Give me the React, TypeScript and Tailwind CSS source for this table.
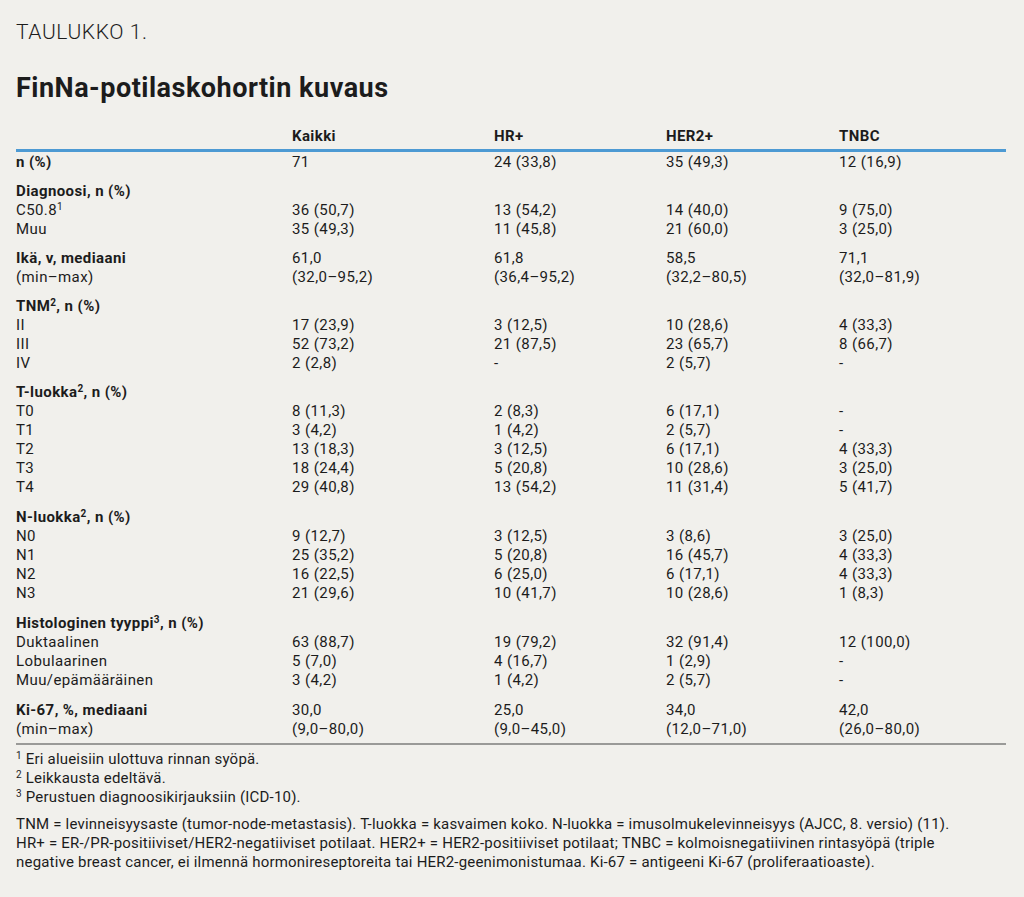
import type { ReactNode } from "react";

type Row = { label: ReactNode; bold?: boolean; vals?: string[] };

const Sup = ({ n }: { n: number }) => (
  <sup className="text-[10px] -top-[0.55em]">{n}</sup>
);

const groups: Row[][] = [
  [{ label: "n (%)", bold: true, vals: ["71", "24 (33,8)", "35 (49,3)", "12 (16,9)"] }],
  [
    { label: "Diagnoosi, n (%)", bold: true },
    { label: <>C50.8<Sup n={1} /></>, vals: ["36 (50,7)", "13 (54,2)", "14 (40,0)", "9 (75,0)"] },
    { label: "Muu", vals: ["35 (49,3)", "11 (45,8)", "21 (60,0)", "3 (25,0)"] },
  ],
  [
    { label: "Ikä, v, mediaani", bold: true, vals: ["61,0", "61,8", "58,5", "71,1"] },
    { label: "(min–max)", vals: ["(32,0–95,2)", "(36,4–95,2)", "(32,2–80,5)", "(32,0–81,9)"] },
  ],
  [
    { label: <>TNM<Sup n={2} />, n (%)</>, bold: true },
    { label: "II", vals: ["17 (23,9)", "3 (12,5)", "10 (28,6)", "4 (33,3)"] },
    { label: "III", vals: ["52 (73,2)", "21 (87,5)", "23 (65,7)", "8 (66,7)"] },
    { label: "IV", vals: ["2 (2,8)", "-", "2 (5,7)", "-"] },
  ],
  [
    { label: <>T-luokka<Sup n={2} />, n (%)</>, bold: true },
    { label: "T0", vals: ["8 (11,3)", "2 (8,3)", "6 (17,1)", "-"] },
    { label: "T1", vals: ["3 (4,2)", "1 (4,2)", "2 (5,7)", "-"] },
    { label: "T2", vals: ["13 (18,3)", "3 (12,5)", "6 (17,1)", "4 (33,3)"] },
    { label: "T3", vals: ["18 (24,4)", "5 (20,8)", "10 (28,6)", "3 (25,0)"] },
    { label: "T4", vals: ["29 (40,8)", "13 (54,2)", "11 (31,4)", "5 (41,7)"] },
  ],
  [
    { label: <>N-luokka<Sup n={2} />, n (%)</>, bold: true },
    { label: "N0", vals: ["9 (12,7)", "3 (12,5)", "3 (8,6)", "3 (25,0)"] },
    { label: "N1", vals: ["25 (35,2)", "5 (20,8)", "16 (45,7)", "4 (33,3)"] },
    { label: "N2", vals: ["16 (22,5)", "6 (25,0)", "6 (17,1)", "4 (33,3)"] },
    { label: "N3", vals: ["21 (29,6)", "10 (41,7)", "10 (28,6)", "1 (8,3)"] },
  ],
  [
    { label: <>Histologinen tyyppi<Sup n={3} />, n (%)</>, bold: true },
    { label: "Duktaalinen", vals: ["63 (88,7)", "19 (79,2)", "32 (91,4)", "12 (100,0)"] },
    { label: "Lobulaarinen", vals: ["5 (7,0)", "4 (16,7)", "1 (2,9)", "-"] },
    { label: "Muu/epämääräinen", vals: ["3 (4,2)", "1 (4,2)", "2 (5,7)", "-"] },
  ],
  [
    { label: "Ki-67, %, mediaani", bold: true, vals: ["30,0", "25,0", "34,0", "42,0"] },
    { label: "(min–max)", vals: ["(9,0–80,0)", "(9,0–45,0)", "(12,0–71,0)", "(26,0–80,0)"] },
  ],
];

const cols = "grid grid-cols-[276px_202px_172px_173px_1fr]";

function TableRow({ row }: { row: Row }) {
  return (
    <div className={cols}>
      <div className={row.bold ? "font-bold" : ""}>{row.label}</div>
      {(row.vals ?? ["", "", "", ""]).map((v, i) => (
        <div key={i}>{v}</div>
      ))}
      <div />
    </div>
  );
}

export default function App() {
  return (
    <div
      className="min-h-screen bg-[#f1f0ec] text-[#1c1c1c] pl-4 pr-[18px] pt-[19px]"
      style={{ fontFamily: "Roboto, 'Noto Sans', sans-serif" }}
    >
      <h2 className="text-[21px] leading-[26px] font-light tracking-[0.6px]">TAULUKKO 1.</h2>
      <h1 className="mt-[27px] text-[27px] leading-[32px] font-bold tracking-[0.5px]">
        FinNa-potilaskohortin kuvaus
      </h1>

      <div className="mt-[23px] text-[15px] leading-[19px] tracking-[0.4px]">
        <div className={`${cols} font-bold`}>
          <div />
          <div>Kaikki</div>
          <div>HR+</div>
          <div>HER2+</div>
          <div>TNBC</div>
          <div />
        </div>
        <div className="mt-[3px] h-[3px] bg-[#4d9ad3]" />

        <div className="pt-[1px] pb-[4px] border-b-2 border-[#9a9a98]">
          {groups.map((g, gi) => (
            <div key={gi} className={gi === 0 ? "" : gi > 4 ? "mt-[11px]" : "mt-[10px]"}>
              {g.map((r, ri) => (
                <TableRow key={ri} row={r} />
              ))}
            </div>
          ))}
        </div>

        <div className="mt-[5px] tracking-[0.2px]">
          <p>
            <Sup n={1} /> Eri alueisiin ulottuva rinnan syöpä.
          </p>
          <p>
            <Sup n={2} /> Leikkausta edeltävä.
          </p>
          <p>
            <Sup n={3} /> Perustuen diagnoosikirjauksiin (ICD-10).
          </p>
        </div>

        <p className="mt-[8px] tracking-[0.2px]">
          TNM = levinneisyysaste (tumor-node-metastasis). T-luokka = kasvaimen koko. N-luokka =
          imusolmukelevinneisyys (AJCC, 8. versio) (11).
          <br />
          HR+ = ER-/PR-positiiviset/HER2-negatiiviset potilaat. HER2+ = HER2-positiiviset potilaat;
          TNBC = kolmoisnegatiivinen rintasyöpä (triple
          <br />
          negative breast cancer, ei ilmennä hormonireseptoreita tai HER2-geenimonistumaa. Ki-67 =
          antigeeni Ki-67 (proliferaatioaste).
        </p>
      </div>
    </div>
  );
}
